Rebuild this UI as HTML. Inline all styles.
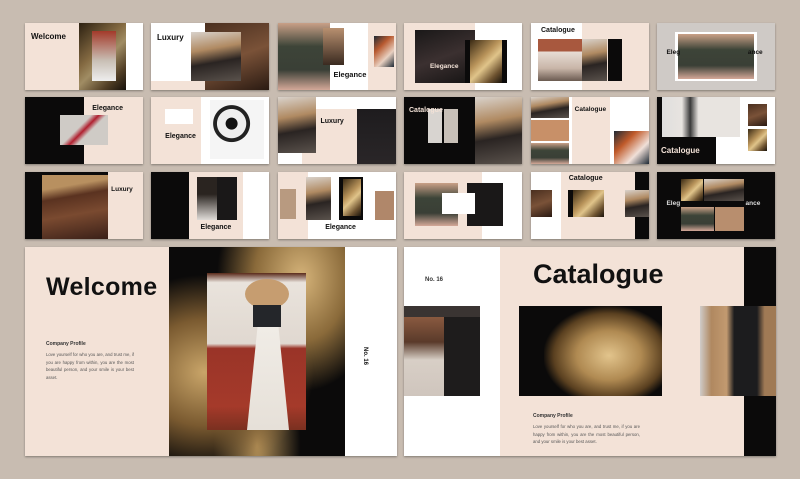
<!DOCTYPE html>
<html><head><meta charset="utf-8"><style>
*{margin:0;padding:0;box-sizing:border-box}
body{width:800px;height:479px;background:#c8bcb1;position:relative;overflow:hidden;font-family:"Liberation Sans",sans-serif}
.s{position:absolute;overflow:hidden;box-shadow:0 1px 2px rgba(0,0,0,.35);background:#f3e2d7}
.b{position:absolute}
.pe{background:#f3e2d7}.w{background:#fff}.k{background:#0b0a0a}
.g{background:linear-gradient(135deg,#3a2a14,#b8935a 40%,#e0c48a 55%,#6e5330 80%,#1a140c)}
.br{background:linear-gradient(160deg,#4a2f1f,#7a5238,#2a1a12)}
.tan{background:linear-gradient(170deg,#d9d2cb 0%,#b08a62 35%,#2a2422 60%,#5a524c 100%)}
.gr{background:linear-gradient(180deg,#c9a087,#3d4438 35%,#3a3f36 70%,#d4a898)}
.lt{background:#d8d4d0}
.t{position:absolute;font-weight:bold;color:#111}
.tw{color:#f3e2d7}
</style></head><body>

<!-- Row 1 -->
<div class="s" style="left:25px;top:23px;width:118px;height:67px">
<div class="b k" style="left:46%;top:0;width:40%;height:100%"></div>
<div class="b g" style="left:46%;top:0;width:40%;height:100%;opacity:.7"></div>
<div class="b" style="left:57%;top:12%;width:20%;height:75%;background:linear-gradient(180deg,#a33a2a,#c9c0b6 60%,#eee)"></div>
<div class="b w" style="left:86%;top:0;width:14%;height:100%"></div>
<div class="t" style="left:6px;top:9px;font-size:8px">Welcome</div>
</div>
<div class="s w" style="left:151px;top:23px;width:118px;height:67px">
<div class="b br" style="left:46%;top:0;width:54%;height:100%"></div>
<div class="b tan" style="left:34%;top:13%;width:42%;height:74%"></div>
<div class="b pe" style="left:0;top:87%;width:46%;height:13%"></div>
<div class="t" style="left:6px;top:10px;font-size:8px">Luxury</div>
</div>
<div class="s" style="left:278px;top:23px;width:118px;height:67px">
<div class="b gr" style="left:0;top:0;width:44%;height:100%"></div>
<div class="b" style="left:38%;top:8%;width:18%;height:55%;background:#c09a7e"></div>
<div class="b w" style="left:44%;top:0;width:32%;height:100%"></div>
<div class="b" style="left:38%;top:8%;width:18%;height:55%;background:linear-gradient(#b89070,#3a2a20)"></div>
<div class="b" style="left:77%;top:0;width:23%;height:100%;background:#f3e2d7"></div>
<div class="b" style="left:81%;top:20%;width:17%;height:45%;background:linear-gradient(135deg,#1e2a35,#b85a30,#e8d0c0,#1e2a35)"></div>
<div class="t" style="left:47%;top:47px;font-size:7.5px">Elegance</div>
</div>
<div class="s" style="left:404px;top:23px;width:118px;height:67px">
<div class="b w" style="left:60%;top:0;width:40%;height:100%"></div>
<div class="b" style="left:9%;top:10%;width:51%;height:79%;background:linear-gradient(160deg,#1a1818,#3b3030 50%,#151313)"></div>
<div class="b k" style="left:52%;top:25%;width:35%;height:64%"></div>
<div class="b g" style="left:56%;top:25%;width:27%;height:64%"></div>
<div class="t tw" style="left:22%;top:40px;font-size:6.5px">Elegance</div>
</div>
<div class="s w" style="left:531px;top:23px;width:118px;height:67px">
<div class="b pe" style="left:43%;top:0;width:57%;height:100%"></div>
<div class="b" style="left:6%;top:24%;width:37%;height:63%;background:linear-gradient(#a8583e 30%,#e8ddd5 30%,#c8b5a8 70%,#6a5a50)"></div>
<div class="b tan" style="left:43%;top:24%;width:21%;height:63%"></div>
<div class="b k" style="left:65%;top:24%;width:12%;height:63%"></div>
<div class="t" style="left:10px;top:4px;font-size:7px">Catalogue</div>
</div>
<div class="s" style="left:657px;top:23px;width:118px;height:67px;background:#cfcac6">
<div class="b w" style="left:15%;top:14%;width:70%;height:72%"></div>
<div class="b gr" style="left:18%;top:17%;width:64%;height:66%"></div>
<div class="t" style="left:8%;top:26px;font-size:6.5px">Eleg</div>
<div class="t" style="left:77%;top:26px;font-size:6.5px">ance</div>
</div>

<!-- Row 2 -->
<div class="s" style="left:25px;top:97px;width:118px;height:67px">
<div class="b k" style="left:0;top:0;width:50%;height:100%"></div>
<div class="b" style="left:30%;top:27%;width:40%;height:44%;background:linear-gradient(135deg,#cfcbc6 40%,#b02030 50%,#cfcbc6 60%)"></div>
<div class="t" style="left:57%;top:8px;font-size:7px">Elegance</div>
</div>
<div class="s w" style="left:151px;top:97px;width:118px;height:67px">
<div class="b pe" style="left:0;top:0;width:42%;height:100%"></div>
<div class="b w" style="left:12%;top:18%;width:24%;height:22%"></div>
<div class="b" style="left:50%;top:5%;width:46%;height:87%;background:radial-gradient(circle at 40% 40%,#111 0 12%,#eee 13% 30%,#222 31% 38%,#f5f5f5 39%)"></div>
<div class="t" style="left:12%;top:36px;font-size:7px">Elegance</div>
</div>
<div class="s" style="left:278px;top:97px;width:118px;height:67px">
<div class="b tan" style="left:0;top:0;width:32%;height:83%"></div>
<div class="b w" style="left:0;top:83%;width:20%;height:17%"></div>
<div class="b w" style="left:32%;top:0;width:68%;height:18%"></div>
<div class="b" style="left:67%;top:18%;width:33%;height:82%;background:linear-gradient(#1e1c1e,#2a2628)"></div>
<div class="t" style="left:36%;top:21px;font-size:7px">Luxury</div>
</div>
<div class="s" style="left:404px;top:97px;width:118px;height:67px">
<div class="b k" style="left:0;top:0;width:60%;height:100%"></div>
<div class="b lt" style="left:20%;top:18%;width:12%;height:50%"></div>
<div class="b" style="left:34%;top:18%;width:12%;height:50%;background:#c8c0b8"></div>
<div class="b tan" style="left:60%;top:0;width:40%;height:100%"></div>
<div class="t tw" style="left:5px;top:10px;font-size:7px">Catalogue</div>
</div>
<div class="s w" style="left:531px;top:97px;width:118px;height:67px">
<div class="b tan" style="left:0;top:0;width:32%;height:31%"></div>
<div class="b" style="left:0;top:35%;width:32%;height:30%;background:#c89068"></div>
<div class="b gr" style="left:0;top:68%;width:32%;height:32%"></div>
<div class="b pe" style="left:35%;top:0;width:32%;height:100%"></div>
<div class="b" style="left:70%;top:50%;width:30%;height:50%;background:linear-gradient(135deg,#1e2a35,#c05a2a,#f0e0d8,#1e2a35)"></div>
<div class="t" style="left:37%;top:9px;font-size:6.5px">Catalogue</div>
</div>
<div class="s w" style="left:657px;top:97px;width:118px;height:67px">
<div class="b" style="left:0;top:0;width:70%;height:60%;background:linear-gradient(90deg,#ddd 0,#e8e4e0 30%,#3a3a3a 40%,#e8e4e0 50%)"></div>
<div class="b k" style="left:0;top:60%;width:50%;height:40%"></div>
<div class="b k" style="left:0;top:0;width:4%;height:60%"></div>
<div class="b br" style="left:77%;top:10%;width:16%;height:33%"></div>
<div class="b g" style="left:77%;top:48%;width:16%;height:32%"></div>
<div class="t tw" style="left:4px;top:49px;font-size:8px">Catalogue</div>
</div>

<!-- Row 3 -->
<div class="s" style="left:25px;top:172px;width:118px;height:67px">
<div class="b k" style="left:0;top:0;width:70%;height:100%"></div>
<div class="b" style="left:14%;top:4%;width:56%;height:96%;background:linear-gradient(170deg,#b89060 0 20%,#5a3220 35%,#7a4a30 60%,#3a2018)"></div>
<div class="t" style="left:73%;top:14px;font-size:6.5px">Luxury</div>
</div>
<div class="s" style="left:151px;top:172px;width:118px;height:67px">
<div class="b k" style="left:0;top:0;width:32%;height:100%"></div>
<div class="b w" style="left:78%;top:0;width:22%;height:100%"></div>
<div class="b" style="left:39%;top:8%;width:17%;height:64%;background:linear-gradient(#2a2420 40%,#e0dcd8)"></div>
<div class="b" style="left:56%;top:8%;width:17%;height:64%;background:#1a1818"></div>
<div class="t" style="left:42%;top:52px;font-size:7px">Elegance</div>
</div>
<div class="s w" style="left:278px;top:172px;width:118px;height:67px">
<div class="b pe" style="left:0;top:0;width:25%;height:100%"></div>
<div class="b" style="left:2%;top:25%;width:13%;height:45%;background:#b89a80"></div>
<div class="b tan" style="left:24%;top:7%;width:21%;height:65%"></div>
<div class="b k" style="left:52%;top:7%;width:20%;height:65%"></div>
<div class="b g" style="left:55%;top:10%;width:15%;height:55%"></div>
<div class="b" style="left:82%;top:28%;width:16%;height:43%;background:#b0876a"></div>
<div class="t" style="left:40%;top:52px;font-size:7px">Elegance</div>
</div>
<div class="s" style="left:404px;top:172px;width:118px;height:67px">
<div class="b w" style="left:66%;top:0;width:34%;height:100%"></div>
<div class="b gr" style="left:9%;top:17%;width:37%;height:63%"></div>
<div class="b" style="left:53%;top:17%;width:31%;height:63%;background:#1a1818"></div>
<div class="b w" style="left:32%;top:32%;width:28%;height:30%"></div>
</div>
<div class="s w" style="left:531px;top:172px;width:118px;height:67px">
<div class="b pe" style="left:25%;top:0;width:63%;height:100%"></div>
<div class="b k" style="left:88%;top:0;width:12%;height:100%"></div>
<div class="b br" style="left:0;top:27%;width:18%;height:40%"></div>
<div class="b k" style="left:31%;top:27%;width:31%;height:40%"></div>
<div class="b g" style="left:36%;top:27%;width:26%;height:40%"></div>
<div class="b tan" style="left:80%;top:27%;width:20%;height:40%"></div>
<div class="t" style="left:32%;top:3px;font-size:7px">Catalogue</div>
</div>
<div class="s k" style="left:657px;top:172px;width:118px;height:67px">
<div class="b g" style="left:20%;top:10%;width:19%;height:33%"></div>
<div class="b tan" style="left:40%;top:10%;width:34%;height:33%"></div>
<div class="b gr" style="left:20%;top:52%;width:28%;height:36%"></div>
<div class="b" style="left:49%;top:52%;width:25%;height:36%;background:#b88e6e"></div>
<div class="t" style="left:8%;top:28px;font-size:6.5px;color:#ddd">Eleg</div>
<div class="t" style="left:75%;top:28px;font-size:6.5px;color:#ddd">ance</div>
</div>

<!-- Big slide 1 -->
<div class="s" style="left:25px;top:247px;width:372px;height:209px">
<div class="b k" style="left:144px;top:0;width:176px;height:209px"></div>
<div class="b" style="left:144px;top:0;width:176px;height:209px;background:radial-gradient(ellipse at 20% 60%,#c9a569 0,#7a5a30 30%,transparent 55%),radial-gradient(ellipse at 75% 15%,#d6b47a 0,#8a6a3a 25%,transparent 45%),radial-gradient(ellipse at 50% 95%,#b8945a 0,transparent 35%)"></div>
<div class="b" style="left:182px;top:26px;width:99px;height:157px;background:linear-gradient(180deg,#5a2a1a 0,#e9e3dc 6%,#e0d8d0 45%,#9a3428 48%,#a53a2a 85%,#7a3020 100%)"></div>
<div class="b" style="left:220px;top:32px;width:44px;height:30px;border-radius:50%;background:#c69d70"></div>
<div class="b" style="left:228px;top:58px;width:28px;height:22px;background:#24262a"></div>
<div class="b" style="left:222px;top:80px;width:42px;height:103px;background:linear-gradient(#f0ece6,#e6e0d8);clip-path:polygon(25% 0,75% 0,100% 100%,0 100%)"></div>
<div class="b w" style="left:320px;top:0;width:52px;height:209px"></div>
<div class="t" style="left:21px;top:26px;font-size:25px;letter-spacing:.3px">Welcome</div>
<div class="t" style="left:21px;top:94px;font-size:5px;color:#333">Company Profile</div>
<div class="b" style="left:21px;top:104px;width:88px;font-size:4.3px;line-height:7.5px;color:#555;text-align:justify">Love yourself for who you are, and trust me, if you are happy from within, you are the most beautiful person, and your smile is your best asset.</div>
<div class="t" style="left:343px;top:100px;font-size:6px;transform:rotate(90deg);transform-origin:0 0;white-space:nowrap">No. 16</div>
</div>

<!-- Big slide 2 -->
<div class="s" style="left:404px;top:247px;width:372px;height:209px">
<div class="b w" style="left:0;top:0;width:96px;height:209px"></div>
<div class="b k" style="left:340px;top:0;width:32px;height:209px"></div>
<div class="t" style="left:21px;top:30px;font-size:6px;color:#333">No. 16</div>
<div class="t" style="left:129px;top:12px;font-size:27px">Catalogue</div>
<div class="b" style="left:0;top:59px;width:76px;height:90px;background:linear-gradient(180deg,#3a3432 0 12%,#8a5a40 12%,#5a3a2a 40%,#d8cfc6 60%,#cfc5bd 100%)"></div>
<div class="b" style="left:40px;top:70px;width:36px;height:79px;background:#1e1c1c"></div>
<div class="b k" style="left:115px;top:59px;width:143px;height:90px"></div>
<div class="b" style="left:140px;top:59px;width:118px;height:90px;background:radial-gradient(ellipse at 55% 55%,#e2c48c 0,#b08a52 35%,#5a4020 60%,transparent 72%)"></div>
<div class="b" style="left:296px;top:59px;width:76px;height:90px;background:linear-gradient(90deg,#cfcbc8 0,#b08860 15%,#c29a70 35%,#1c1c1e 45%,#1c1c1e 75%,#a07a55 85%)"></div>
<div class="t" style="left:129px;top:166px;font-size:5px;color:#333">Company Profile</div>
<div class="b" style="left:129px;top:176px;width:107px;font-size:4.3px;line-height:7.5px;color:#555;text-align:justify">Love yourself for who you are, and trust me, if you are happy from within, you are the most beautiful person, and your smile is your best asset.</div>
</div>
</body></html>
